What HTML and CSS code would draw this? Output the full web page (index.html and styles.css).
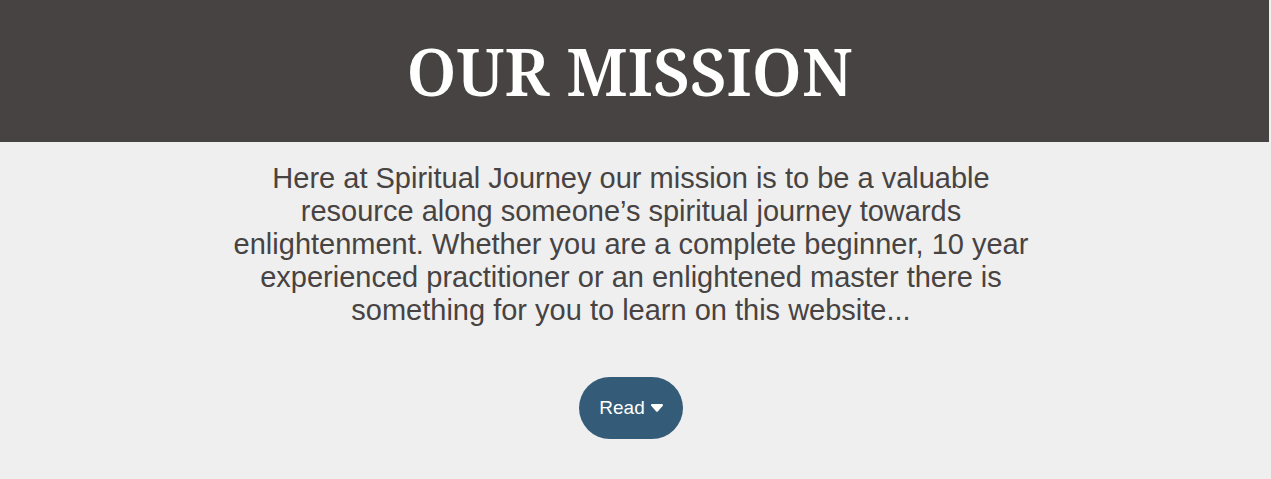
FILE: index.html
```html
<!DOCTYPE html>
<html lang="en">
<head>
<meta charset="utf-8">
<title>Our Mission</title>
<link rel="stylesheet" href="styles.css">
</head>
<body>
<header class="banner">
  <h1 class="banner-title">OUR MISSION</h1>
</header>
<main class="mission">
  <p class="mission-text">Here at Spiritual Journey our mission is to be a valuable resource along someone’s spiritual journey towards enlightenment. Whether you are a complete beginner, 10 year experienced practitioner or an enlightened master there is something for you to learn on this website...</p>
  <button class="read-button" type="button">Read
    <svg class="caret" viewBox="0 0 12 8" aria-hidden="true"><path d="M1.300 0h9.400c1.200 0 1.700 1.300.9 2.100L7 7.200c-.6.700-1.400.700-2 0L.4 2.100C-.4 1.300.1 0 1.300 0z" fill="currentColor"/></svg>
  </button>
</main>
</body>
</html>
```
FILE: styles.css
```css
body {
  margin: 0;
  background: #efefef;
  font-family: "Liberation Sans", Arial, sans-serif;
}
.banner {
  margin-right: 2px;
  padding: 31px 0;
  background: #474342;
  color: #fff;
  text-align: center;
}
.banner-title {
  margin: 0 10px 0 0;
  font: 600 65px/80px "Noto Serif", "Liberation Serif", serif;
}
.mission {
  display: flex;
  flex-direction: column;
  align-items: center;
  margin-right: 9px;
  padding: 20px 0 40px;
}
.mission-text {
  max-width: 800px;
  margin: 0 0 50px;
  color: #474342;
  font-size: 29px;
  line-height: 33px;
  text-align: center;
}
.read-button {
  display: flex;
  align-items: center;
  gap: 6px;
  padding: 20px;
  border: 0;
  border-radius: 32px;
  background: #345b78;
  color: #fff;
  font: 19px/22px "Liberation Sans", Arial, sans-serif;
}
.caret {
  width: 12px;
  height: 8px;
}
```
